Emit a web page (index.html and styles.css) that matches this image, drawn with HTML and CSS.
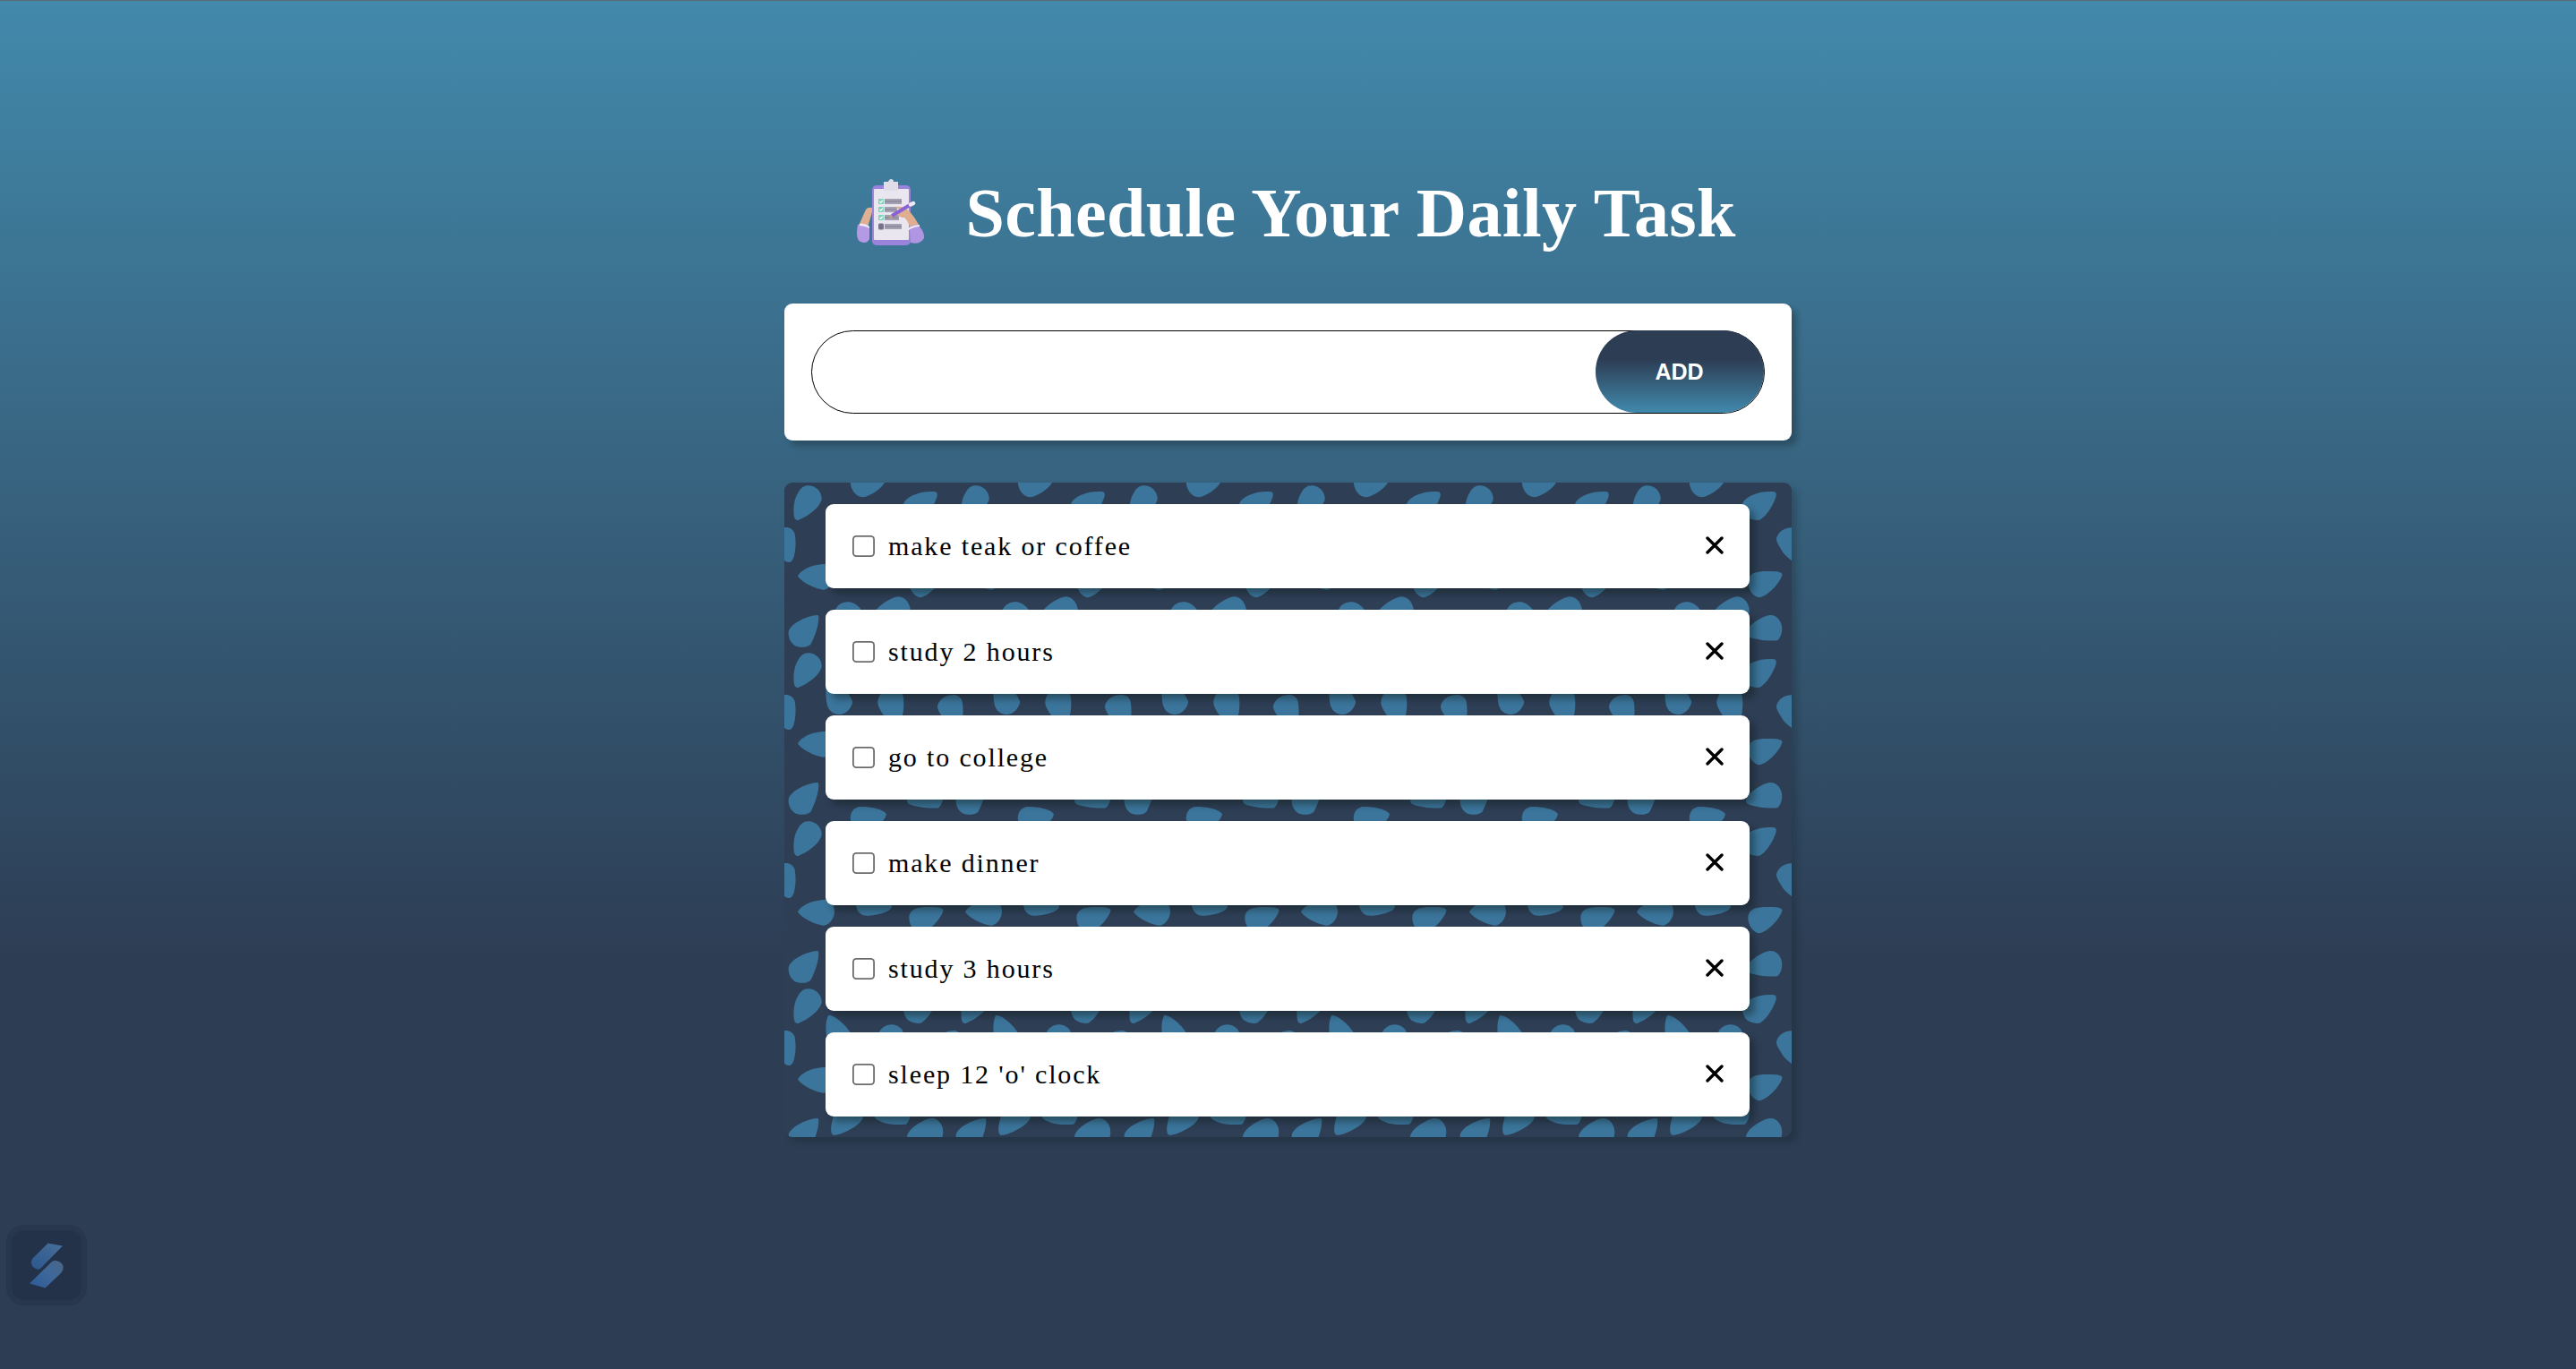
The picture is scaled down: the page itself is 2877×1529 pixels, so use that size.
FILE: index.html
```html
<!DOCTYPE html>
<html lang="en">
<head>
<meta charset="utf-8">
<title>Schedule Your Daily Task</title>
<link rel="stylesheet" href="styles.css">
</head>
<body>
<main class="app">
  <header class="heading">
    <svg class="heading-icon" viewBox="0 0 76 76" aria-hidden="true">
      <path d="M10 33 Q12 30 17 31 L17 36 L12 53 L2 51 Z" fill="#e0b092"/>
      <path d="M1 50 Q8 48 14 52 L14 66 Q11 72 4 69 Q-2 66 1 50Z" fill="#b49ae4"/>
      <path d="M3 49 Q9 48 14 52 L14 54 Q9 51 3 51Z" fill="#efeaf6"/>
      <rect x="17" y="6" width="43" height="67" rx="5" fill="#9a83da"/>
      <rect x="19" y="10" width="39" height="57" rx="1" fill="#e9e6f0"/>
      <path d="M30 2 H35 Q36 -1 38 -1 Q41 -1 41 2 H46 V12 H30Z" fill="#dfdde9"/>
      <g fill="#7fd3b8"><rect x="24" y="21" width="6" height="6" rx="1"/><rect x="24" y="30" width="6" height="6" rx="1"/><rect x="24" y="39" width="6" height="6" rx="1"/></g>
      <rect x="24" y="48.500" width="6" height="7" rx="1.500" fill="#77748a"/>
      <g stroke="#fff" stroke-width="1.200" fill="none"><path d="M25.500 24l1.200 1.300 2.300-2.700M25.500 33l1.200 1.300 2.300-2.700M25.500 42l1.200 1.300 2.300-2.700"/></g>
      <g fill="#a3a0b2"><rect x="31" y="21" width="19" height="6"/><rect x="31" y="30" width="14" height="6"/><rect x="31" y="39" width="16" height="6"/><rect x="31" y="49" width="19" height="6"/></g>
      <g stroke="#807d90" stroke-width="1"><path d="M31 24h19M31 33h13M31 42h15M31 52h19"/></g>
      <path d="M43 30 Q50 29 55 32 Q62 37 69 50 L60 54 Q56 44 53 42 Q46 42 45 37 L49 34Z" fill="#dfae90"/>
      <path d="M59 52 Q63 50 68 50 Q76 58 75 65 Q70 73 60 70Z" fill="#b095e2"/>
      <path d="M57 54 Q63 50 70 50 L70 52 Q64 52 58 56Z" fill="#efeaf6"/>
      <path d="M39 40 L61 27" stroke="#8a62d6" stroke-width="4"/>
      <path d="M60 27.500 L63 26" stroke="#eee9f4" stroke-width="4.500" stroke-linecap="round"/>
      <path d="M36 43 L38 38.500 L40.500 42Z" fill="#c9a27c"/>
    </svg>
    <h1 class="title">Schedule Your Daily Task</h1>
  </header>

  <form class="entry card">
    <div class="entry-field">
      <input class="entry-input" type="text" aria-label="New task">
      <button class="entry-add" type="button">ADD</button>
    </div>
  </form>

  <ul class="tasks">
    <li class="task"><input class="task-check" type="checkbox"><span class="task-name">make teak or coffee</span><svg class="task-remove" viewBox="0 0 20 20"><path d="M2 2L18 18M18 2L2 18"/></svg></li>
    <li class="task"><input class="task-check" type="checkbox"><span class="task-name">study 2 hours</span><svg class="task-remove" viewBox="0 0 20 20"><path d="M2 2L18 18M18 2L2 18"/></svg></li>
    <li class="task"><input class="task-check" type="checkbox"><span class="task-name">go to college</span><svg class="task-remove" viewBox="0 0 20 20"><path d="M2 2L18 18M18 2L2 18"/></svg></li>
    <li class="task"><input class="task-check" type="checkbox"><span class="task-name">make dinner</span><svg class="task-remove" viewBox="0 0 20 20"><path d="M2 2L18 18M18 2L2 18"/></svg></li>
    <li class="task"><input class="task-check" type="checkbox"><span class="task-name">study 3 hours</span><svg class="task-remove" viewBox="0 0 20 20"><path d="M2 2L18 18M18 2L2 18"/></svg></li>
    <li class="task"><input class="task-check" type="checkbox"><span class="task-name">sleep 12 'o' clock</span><svg class="task-remove" viewBox="0 0 20 20"><path d="M2 2L18 18M18 2L2 18"/></svg></li>
  </ul>
</main>

<div class="badge">
  <svg class="badge-logo" viewBox="0 0 38 51" aria-hidden="true">
    <defs>
      <linearGradient id="up" x1="1" y1="0" x2="0" y2="1"><stop offset="0" stop-color="#496f97"/><stop offset="1" stop-color="#2a5790"/></linearGradient>
      <linearGradient id="down" x1="1" y1="0" x2="0" y2="1"><stop offset="0" stop-color="#496688"/><stop offset=".45" stop-color="#3f689a"/><stop offset="1" stop-color="#2b5a96"/></linearGradient>
    </defs>
    <path d="M20.500 .5 L37 3.500 L12 29 Q10 30.500 7 29 Q2 27 1.800 22 Q2 19 4 17Z" fill="url(#up)"/>
    <path d="M0 45.500 L25 21 Q27 19.500 30 20 Q37 22 37.700 27 Q37.500 31 35 34 L17.500 50.500Z" fill="url(#down)"/>
  </svg>
</div>
</body>
</html>
```
FILE: styles.css
```css
* {
  box-sizing: border-box;
}

body {
  margin: 0;
  min-height: 1529px;
  border-top: 1px solid #5b6b76;
  background: linear-gradient(to top, #2d3d54 30%, #4289ab);
  font-family: "Liberation Serif", "Times New Roman", serif;
  color: #000;
}

.app {
  width: 1125px;
  margin: 0 0 0 876px;
  padding-top: 192px;
}

.heading {
  display: flex;
  align-items: flex-start;
  height: 146px;
  padding-left: 81px;
}

.heading-icon {
  width: 76px;
  height: 76px;
  margin-top: 8px;
  overflow: visible;
}

.title {
  margin: 0 0 0 45.5px;
  font-size: 78px;
  line-height: 90px;
  letter-spacing: 0.35px;
  white-space: nowrap;
  color: #fff;
}

.entry {
  height: 153px;
  padding: 30px;
  border-radius: 9px;
  background: #fff;
  box-shadow: 6px 6px 7.5px rgba(14, 28, 30, 0.32);
}

.entry-field {
  position: relative;
  display: flex;
  height: 93px;
  border-radius: 47px;
}

.entry-input {
  flex: 1;
  padding: 0 200px 0 30px;
  border: 1px solid #000;
  border-radius: 47px;
  outline: 0;
  background: #fff;
  font: inherit;
  font-size: 30px;
}

.entry-add {
  position: absolute;
  top: 0;
  right: 1px;
  width: 188px;
  height: 92px;
  padding: 0 1px 0 0;
  border: 0;
  border-radius: 46px;
  background: linear-gradient(to bottom, #2d3d54 35%, #4189ad);
  font: bold 25px "Liberation Sans", Arial, sans-serif;
  letter-spacing: 0;
  color: #fff;
}

.tasks {
  display: flex;
  flex-direction: column;
  gap: 24px;
  margin: 47px 0 0;
  padding: 24px 47px 23px 46px;
  border-radius: 9px;
  list-style: none;
  box-shadow: 6px 6px 7.5px rgba(14, 28, 30, 0.24);
  background: #2e3e55 0 0 / 187.5px 187.5px url("data:image/svg+xml,%3Csvg xmlns='http://www.w3.org/2000/svg' viewBox='0 0 187.5 187.5'%3E%3Cg fill='%233b759b'%3E%3Cpath d='M26 3.3C35 3 42 10 41.6 19C38 30 25 38 16 41.6C12 42.5 11 40 10.6 35C10 27 11 18 15.5 11C18 6 22 3.5 26 3.3Z'/%3E%3Cpath id='b' d='M0 50C6 49.500 9 52 11.300 56C13 63 13 74 10.700 82.500C9.500 87 7 89 5 88.800C0 88 -6 82 -9.500 78C-12 74 -17 67 -17 62.700C-16 56 -9 50 0 50Z'/%3E%3Cpath transform='translate(187.5)' d='M0 50C6 49.500 9 52 11.300 56C13 63 13 74 10.700 82.500C9.500 87 7 89 5 88.800C0 88 -6 82 -9.500 78C-12 74 -17 67 -17 62.700C-16 56 -9 50 0 50Z'/%3E%3Cpath d='M15 104C18 98 30 91 47 90.6C53 92 56 99 55.8 105C55 113 49 119.500 43 119.400C33 118 18 110 15 104Z'/%3E%3Cpath d='M36.800 147.700C38.500 147.800 38.300 150 38 154C37 163 33 173 29.500 180C26 184 17 184 12.500 182C7 179 4 172 4.700 166C7 158 22 149 36.800 147.700Z'/%3E%3Cpath d='M168 10.200C170 10.500 170.500 12 170.200 15C167 26 160 36 152.500 41.500C147 42.500 142 41 138 38.500C134 35 132 28 133 23C136 16 150 9 168 10.200Z'/%3E%3Cpath d='M160 98.700C170 98.500 176 99 177 102C177 108 163 126 151.500 128C145 127.500 138.500 119 139 110C140 103 143 99 160 98.700Z'/%3E%3Cpath d='M163 147.700C171 147 177 155 176.800 163C176.500 170 174 174 171.500 175.800C165 177 145 175 138 171C136 169 136.500 166 138 164C142 157 155 149 163 147.700Z'/%3E%3Cpath d='M83 -13C92 -13.500 110 -11 113.600 -5C113 3 98 15 87.300 16.300C79 15.500 74 8 73.500 -1C74 -6 76 -11 83 -13Z'/%3E%3Cpath d='M83 174.500C92 174 110 176.500 113.600 182.500C113 190.500 98 202.500 87.300 203.800C79 203 74 195.500 73.500 186.500C74 181.500 76 176.500 83 174.500Z'/%3E%3Cpath d='M71.300 133C78 133 87 140 87.500 147C85 155 68 164 57 166.300C53 167 52 164 52 159C53 148 57 137 64 134.500C66 133.500 69 133 71.300 133Z'/%3E%3Cpath d='M127.300 127C136 127.500 142 138 140 146C139 150 137 153.500 135 154.300C122 155.500 110 154 102 148C100 146 100 144.500 102 142C107 136 119 127.500 127.300 127Z'/%3E%3Cpath d='M50.500 32.800C57 33 73 47 76 57.500C75 65 68 72 60.700 71.800C54 71 50 68 48 62C46 54 45.500 42 48 35.500C48.500 33.500 49 32.500 50.500 32.800Z'/%3E%3Cpath d='M119 43.200C126 43.500 131 47 132.500 52C133.500 60 133 68 131 75C129 81 126 84 123 83C115 80 105 67 104 58.500C104 50 111 43.500 119 43.200Z'/%3E%3Cpath d='M94 79C104 77 120 92 119.500 99C118 105 96 110 88 108C81 105 79 98 80 91C82 84 87 80 94 79Z'/%3E%3C/g%3E%3C/svg%3E");
}

.task {
  display: flex;
  align-items: center;
  height: 94px;
  padding: 0 30px;
  border-radius: 9px;
  background: #fff;
  box-shadow: 6px 6px 7.5px rgba(14, 28, 24, 0.4);
}

.task-check {
  width: 24.5px;
  height: 24px;
  margin: -1px 0 0;
  appearance: none;
  border-radius: 4.5px;
  background: #fff;
  box-shadow: inset 0 0 0 1.8px #6c6c6c;
}

.task-name {
  flex: 1;
  margin-left: 15.5px;
  font-size: 30px;
  letter-spacing: 1.85px;
  white-space: nowrap;
}

.task-remove {
  width: 20px;
  height: 20px;
  margin: -2px -0.5px 0 0;
  fill: none;
  stroke: #000;
  stroke-width: 3.400;
  stroke-linecap: round;
}

.badge {
  position: fixed;
  left: 13px;
  top: 1374px;
  display: grid;
  place-items: center;
  width: 78px;
  height: 78px;
  border-radius: 14px;
  background: #243249;
  box-shadow: 0 0 0 6px #28374e;
}

.badge-logo {
  width: 38px;
  height: 51px;
}
```
